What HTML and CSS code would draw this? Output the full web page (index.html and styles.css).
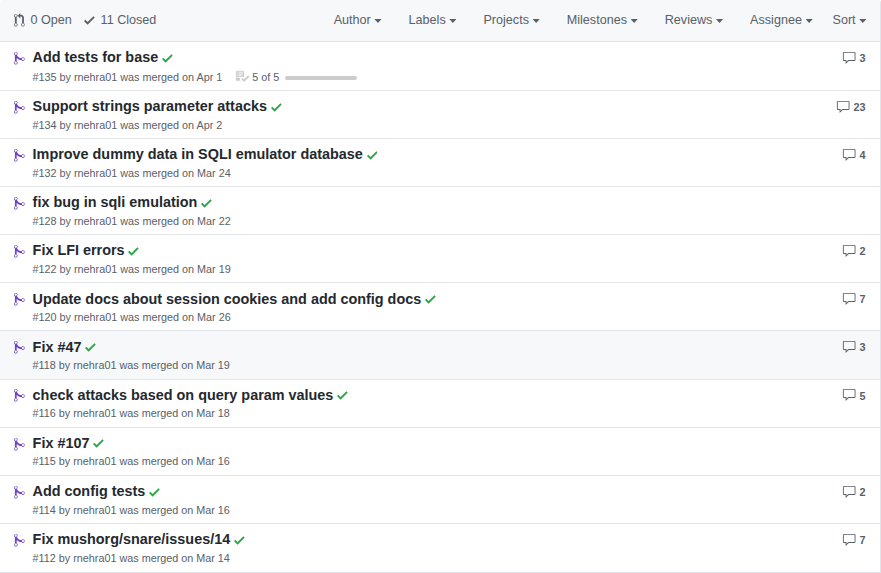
FILE: index.html
```html
<!DOCTYPE html>
<html lang="en">
<head>
<meta charset="utf-8">
<title>Pull requests</title>
<link rel="stylesheet" href="styles.css">
</head>
<body>
<svg class="sprite" aria-hidden="true">
  <symbol id="pr" viewBox="0 0 12 16"><path d="M11 11.28V5c-.03-.78-.34-1.47-.94-2.06C9.46 2.35 8.78 2.03 8 2H7V0L4 3l3 3V4h1c.27.02.48.11.69.31.21.2.3.42.31.69v6.28A1.993 1.993 0 0010 15a1.993 1.993 0 001-3.72zm-1 2.92c-.66 0-1.2-.55-1.2-1.2 0-.65.55-1.2 1.2-1.2.65 0 1.2.55 1.2 1.2 0 .65-.55 1.2-1.2 1.2zM4 3c0-1.11-.89-2-2-2a1.993 1.993 0 00-1 3.72v6.56A1.993 1.993 0 002 15a1.993 1.993 0 001-3.72V4.72c.59-.34 1-.98 1-1.72zm-.8 10c0 .66-.55 1.2-1.2 1.2-.65 0-1.2-.55-1.2-1.2 0-.65.55-1.2 1.2-1.2.65 0 1.2.55 1.2 1.2zM2 4.2C1.34 4.2.8 3.65.8 3c0-.65.55-1.2 1.2-1.2.65 0 1.2.55 1.2 1.2 0 .65-.55 1.2-1.2 1.2z"/></symbol>
  <symbol id="merge" viewBox="0 0 12 16"><path d="M10 7c-.73 0-1.38.41-1.73 1.02V8C7.22 7.98 6 7.64 5.14 6.98c-.75-.58-1.5-1.61-1.89-2.44A1.993 1.993 0 002 .99C.89.99 0 1.89 0 3a2 2 0 001 1.72v6.56c-.59.35-1 .99-1 1.72 0 1.11.89 2 2 2a1.993 1.993 0 001-3.72V7.67c.67.7 1.44 1.27 2.3 1.69.86.42 2.03.63 2.97.64v-.02c.36.61 1 1.02 1.73 1.02 1.11 0 2-.89 2-2 0-1.11-.89-2-2-2zm-6.8 6c0 .66-.55 1.2-1.2 1.2-.65 0-1.2-.55-1.2-1.2 0-.65.55-1.2 1.2-1.2.65 0 1.2.55 1.2 1.2zM2 4.2C1.34 4.2.8 3.65.8 3c0-.65.55-1.2 1.2-1.2.65 0 1.2.55 1.2 1.2 0 .65-.55 1.2-1.2 1.2zm8 6c-.66 0-1.2-.55-1.2-1.2 0-.65.55-1.2 1.2-1.2.65 0 1.2.55 1.2 1.2 0 .65-.55 1.2-1.2 1.2z"/></symbol>
  <symbol id="check" viewBox="0 0 12 16"><path d="M12 5l-8 8-4-4 1.5-1.5L4 10l6.5-6.5L12 5z"/></symbol>
  <symbol id="comment" viewBox="0 0 16 16"><path d="M14 1H2c-.55 0-1 .45-1 1v8c0 .55.45 1 1 1h2v3.5L7.5 11H14c.55 0 1-.45 1-1V2c0-.55-.45-1-1-1zm0 9H7l-2 2v-2H2V2h12v8z"/></symbol>
  <symbol id="checklist" viewBox="0 0 16 16"><path d="M16 8.5l-6 6-3-3L8.5 10l1.5 1.5L14.5 7 16 8.5zM5.7 12.2l.8.8H2c-.55 0-1-.45-1-1V3c0-.55.45-1 1-1h7c.55 0 1 .45 1 1v6.5l-.8-.8c-.39-.39-1.03-.39-1.42 0L5.7 10.8a.996.996 0 000 1.41v-.01zM4 4h5V3H4v1zm0 2h5V5H4v1zm0 2h3V7H4v1zM3 9H2v1h1V9zm0-2H2v1h1V7zm0-2H2v1h1V5zm0-2H2v1h1V3zm1 7h3V9H4v1z"/></symbol>
</svg>
<main class="box">
  <header class="header">
    <nav class="states">
      <a class="state"><svg class="icon"><use href="#pr"/></svg>0 Open</a>
      <a class="state"><svg class="icon"><use href="#check"/></svg>11 Closed</a>
    </nav>
    <nav class="filters">
      <span class="filter">Author</span>
      <span class="filter">Labels</span>
      <span class="filter">Projects</span>
      <span class="filter">Milestones</span>
      <span class="filter">Reviews</span>
      <span class="filter">Assignee</span>
      <span class="filter sort">Sort</span>
    </nav>
  </header>
  <ul class="list">
    <li class="row first">
      <svg class="icon merged"><use href="#merge"/></svg>
      <div class="body">
        <div class="title">Add tests for base<svg class="icon pass"><use href="#check"/></svg></div>
        <div class="meta">#135 by rnehra01 was merged on Apr 1<span class="tasks"><svg class="icon wide list-icon"><use href="#checklist"/></svg>5 of 5<span class="progress"></span></span></div>
      </div>
      <a class="comments"><svg class="icon wide"><use href="#comment"/></svg>3</a>
    </li>
    <li class="row">
      <svg class="icon merged"><use href="#merge"/></svg>
      <div class="body">
        <div class="title">Support strings parameter attacks<svg class="icon pass"><use href="#check"/></svg></div>
        <div class="meta">#134 by rnehra01 was merged on Apr 2</div>
      </div>
      <a class="comments"><svg class="icon wide"><use href="#comment"/></svg>23</a>
    </li>
    <li class="row">
      <svg class="icon merged"><use href="#merge"/></svg>
      <div class="body">
        <div class="title">Improve dummy data in SQLI emulator database<svg class="icon pass"><use href="#check"/></svg></div>
        <div class="meta">#132 by rnehra01 was merged on Mar 24</div>
      </div>
      <a class="comments"><svg class="icon wide"><use href="#comment"/></svg>4</a>
    </li>
    <li class="row">
      <svg class="icon merged"><use href="#merge"/></svg>
      <div class="body">
        <div class="title">fix bug in sqli emulation<svg class="icon pass"><use href="#check"/></svg></div>
        <div class="meta">#128 by rnehra01 was merged on Mar 22</div>
      </div>
    </li>
    <li class="row">
      <svg class="icon merged"><use href="#merge"/></svg>
      <div class="body">
        <div class="title">Fix LFI errors<svg class="icon pass"><use href="#check"/></svg></div>
        <div class="meta">#122 by rnehra01 was merged on Mar 19</div>
      </div>
      <a class="comments"><svg class="icon wide"><use href="#comment"/></svg>2</a>
    </li>
    <li class="row">
      <svg class="icon merged"><use href="#merge"/></svg>
      <div class="body">
        <div class="title">Update docs about session cookies and add config docs<svg class="icon pass"><use href="#check"/></svg></div>
        <div class="meta">#120 by rnehra01 was merged on Mar 26</div>
      </div>
      <a class="comments"><svg class="icon wide"><use href="#comment"/></svg>7</a>
    </li>
    <li class="row active">
      <svg class="icon merged"><use href="#merge"/></svg>
      <div class="body">
        <div class="title">Fix #47<svg class="icon pass"><use href="#check"/></svg></div>
        <div class="meta">#118 by rnehra01 was merged on Mar 19</div>
      </div>
      <a class="comments"><svg class="icon wide"><use href="#comment"/></svg>3</a>
    </li>
    <li class="row">
      <svg class="icon merged"><use href="#merge"/></svg>
      <div class="body">
        <div class="title">check attacks based on query param values<svg class="icon pass"><use href="#check"/></svg></div>
        <div class="meta">#116 by rnehra01 was merged on Mar 18</div>
      </div>
      <a class="comments"><svg class="icon wide"><use href="#comment"/></svg>5</a>
    </li>
    <li class="row">
      <svg class="icon merged"><use href="#merge"/></svg>
      <div class="body">
        <div class="title">Fix #107<svg class="icon pass"><use href="#check"/></svg></div>
        <div class="meta">#115 by rnehra01 was merged on Mar 16</div>
      </div>
    </li>
    <li class="row">
      <svg class="icon merged"><use href="#merge"/></svg>
      <div class="body">
        <div class="title">Add config tests<svg class="icon pass"><use href="#check"/></svg></div>
        <div class="meta">#114 by rnehra01 was merged on Mar 16</div>
      </div>
      <a class="comments"><svg class="icon wide"><use href="#comment"/></svg>2</a>
    </li>
    <li class="row last">
      <svg class="icon merged"><use href="#merge"/></svg>
      <div class="body">
        <div class="title">Fix mushorg/snare/issues/14<svg class="icon pass"><use href="#check"/></svg></div>
        <div class="meta">#112 by rnehra01 was merged on Mar 14</div>
      </div>
      <a class="comments"><svg class="icon wide"><use href="#comment"/></svg>7</a>
    </li>
  </ul>
</main>
</body>
</html>
```
FILE: styles.css
```css
* { box-sizing: border-box; }
body {
  margin: 0;
  background: #fff;
  color: #586069;
  font: 12.6px/18.9px "Liberation Sans", Arial, sans-serif;
  overflow: hidden;
}
.sprite { display: none; }
.box { border-right: 1px solid #e1e4e8; border-radius: 3px 3px 0 0; }
.icon { width: 10.8px; height: 14.4px; fill: currentColor; flex: none; }
.icon.wide { width: 14.4px; }
.header {
  display: flex;
  justify-content: space-between;
  height: 42px;
  padding: 11px 13.6px 0 14px;
  background: #f6f8fa;
  border-bottom: 1px solid #e1e4e8;
  border-radius: 3px 3px 0 0;
}
.states, .filters { display: flex; }
.states { gap: 12.5px; }
.state { display: flex; height: 19px; }
.state .icon { margin: 2px 5.6px 0 0; }
.filters { gap: 27px; }
.filter { display: flex; align-items: center; height: 18px; }
.filter::after {
  content: "";
  width: 7.2px;
  height: 4px;
  margin: 2px 0 0 3.6px;
  background: currentColor;
  clip-path: polygon(0 0, 100% 0, 50% 100%);
}
.filter.sort { margin-left: -7.2px; }
.list { margin: 0; padding: 0; list-style: none; }
.row {
  display: flex;
  height: 48.1px;
  padding: 6.2px 14.4px 0 14px;
  border-bottom: 1px solid #e1e4e8;
}
.row.first { height: 48.95px; }
.row.last { height: 49.1px; }
.row.active { background: #f6f8fa; }
.merged { margin: 2.8px 7.8px 0 0; color: #6f42c1; }
.body { flex: 1; }
.title {
  display: flex;
  color: #24292e;
  font-size: 14.4px;
  font-weight: 700;
  line-height: 19px;
}
.pass { margin: 2.7px 0 0 3.8px; color: #28a745; }
.meta { display: flex; margin-top: .68px; font-size: 10.8px; line-height: 16px; }
.first .meta { margin-top: 1.6px; }
.tasks { display: flex; margin-left: 13px; }
.list-icon { margin: .3px 2.5px 0 0; color: #ccc; }
.progress { width: 72px; height: 4px; margin: 7.2px 0 0 6px; border-radius: 3px; background: #ccc; }
.comments { display: flex; margin-top: -.15px; font-size: 10.8px; font-weight: 700; line-height: 21px; }
.comments .icon { margin: 2.9px 3.6px 0 0; }
```
